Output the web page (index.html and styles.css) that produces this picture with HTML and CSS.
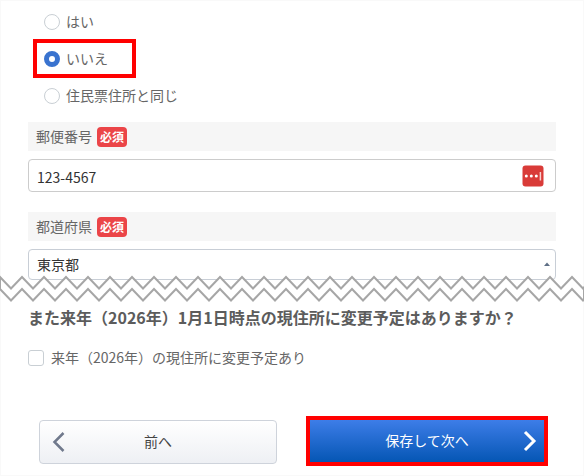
FILE: index.html
```html
<!DOCTYPE html>
<html lang="ja">
<head>
<meta charset="utf-8">
<meta name="viewport" content="width=device-width, initial-scale=1">
<title>住所の入力</title>
<link rel="stylesheet" href="styles.css">
</head>
<body>
<form class="page">
  <div class="choices">
    <label class="choice"><input class="radio" type="radio" name="same"><span class="choice-text">はい</span></label>
    <label class="choice choice-marked"><input class="radio" type="radio" name="same" checked><span class="choice-text">いいえ</span></label>
    <label class="choice"><input class="radio" type="radio" name="same"><span class="choice-text">住民票住所と同じ</span></label>
  </div>

  <div class="field">
    <div class="field-head"><label class="choice-text" for="zip">郵便番号</label><span class="badge">必須</span></div>
    <div class="control">
      <input class="input" id="zip" type="text" value="123-4567">
      <svg class="pass-icon" width="22" height="22" viewBox="0 0 22 22" aria-hidden="true">
        <rect x="0.500" y="0.500" width="21" height="21" rx="3" fill="#d93b38"/>
        <circle cx="4.300" cy="11" r="1.500" fill="#fff"/>
        <circle cx="9.300" cy="11" r="1.500" fill="#fff"/>
        <circle cx="14.300" cy="11" r="1.500" fill="#fff"/>
        <path d="M18.400 7v8.500" stroke="#f6d0cf" stroke-width="1.500"/>
      </svg>
    </div>
  </div>

  <div class="field">
    <div class="field-head"><label class="choice-text" for="pref">都道府県</label><span class="badge">必須</span></div>
    <div class="control">
      <select class="input select" id="pref"><option>東京都</option></select>
      <svg class="caret" width="8" height="4" viewBox="0 0 8 4" aria-hidden="true"><path d="M1 4 4 0.500 7 4z" fill="#5f6f86"/></svg>
    </div>
  </div>

  <svg class="tear" height="28" aria-hidden="true">
    <defs>
      <pattern id="zigzag" width="22" height="28" patternUnits="userSpaceOnUse">
        <path d="M-11 13.500 0 2 11 13.500 22 2 33 13.500V25.500L22 14 11 25.500 0 14-11 25.500z" fill="#fff"/>
        <path d="M-11 13.500 0 2 11 13.500 22 2 33 13.500M-11 25.500 0 14 11 25.500 22 14 33 25.500" fill="none" stroke="#a6a6a6" stroke-width="2"/>
      </pattern>
    </defs>
    <rect width="100%" height="28" fill="url(#zigzag)"/>
    <line x1="0" y1="2" x2="0" y2="14" stroke="#a6a6a6" stroke-width="2"/>
    <line x1="100%" y1="13" x2="100%" y2="25" stroke="#a6a6a6" stroke-width="2"/>
  </svg>

  <h2 class="question">また来年（2026年）1月1日時点の現住所に変更予定はありますか？</h2>
  <label class="check-row"><input class="check" type="checkbox"><span class="choice-text">来年（2026年）の現住所に変更予定あり</span></label>

  <div class="actions">
    <button class="btn btn-prev" type="button">
      <svg class="arrow arrow-left" width="14" height="22" viewBox="0 0 14 22" aria-hidden="true"><path d="M11.500 2 2.500 11l9 9" fill="none" stroke="#70798c" stroke-width="2.500"/></svg>
      前へ
    </button>
    <button class="btn btn-next" type="button">
      保存して次へ
      <svg class="arrow arrow-right" width="14" height="22" viewBox="0 0 14 22" aria-hidden="true"><path d="m2 2 9 9-9 9" fill="none" stroke="#fff" stroke-width="3"/></svg>
    </button>
  </div>
</form>
</body>
</html>
```
FILE: styles.css
```css
* {
  box-sizing: border-box;
}

body {
  margin: 0;
  background: #fff;
  color: #666;
  font: 14px/20px "Noto Sans CJK JP", sans-serif;
}

.page {
  min-height: 100vh;
  padding: 2px 27px 0;
  border: 1px solid #f9f9f9;
}

.choices {
  padding-left: 16px;
  margin-bottom: 8px;
}

.choice {
  position: relative;
  display: flex;
  align-items: center;
  gap: 6px;
  width: fit-content;
  height: 37px;
}

.choice-text {
  padding-bottom: 2px;
}

.choice-marked::before {
  content: "";
  position: absolute;
  inset: -1px -28px -1px -11px;
  border: 4px solid #f00;
}

.radio,
.check {
  appearance: none;
  flex: none;
  width: 16px;
  height: 16px;
  margin: 0;
  border: 1px solid #c9cfd4;
  background: #fff;
}

.radio {
  border-radius: 50%;
}

.radio:checked {
  border: 5px solid #3973cf;
}

.check {
  border-radius: 3px;
}

.field {
  margin-bottom: 20px;
}

.field-head {
  display: flex;
  align-items: center;
  gap: 5px;
  height: 29px;
  padding-left: 8px;
  margin-bottom: 8px;
  background: #f6f6f6;
}

.badge {
  height: 20px;
  padding: 0 3px;
  border-radius: 4px;
  background: #eb4548;
  color: #fff;
  font-size: 12px;
  font-weight: 700;
  line-height: 20px;
}

.control {
  position: relative;
}

.input {
  display: block;
  width: 100%;
  height: 33px;
  padding: 2px 8px 0;
  border: 1px solid #ccc;
  border-radius: 4px;
  background: #fff;
  color: #333;
  font: inherit;
}

.select {
  appearance: none;
  height: 31px;
  padding-top: 0;
  padding-bottom: 1px;
  border-color: #c8ced6;
}

.pass-icon {
  position: absolute;
  top: 6px;
  right: 12px;
}

.caret {
  position: absolute;
  top: 13px;
  right: 5px;
}

.tear {
  position: relative;
  display: block;
  width: calc(100% + 56px);
  margin: -25px -28px 0;
}

.question {
  margin: 2px 0 18px;
  color: #5c5c5c;
  font-size: 16px;
  font-weight: 700;
  line-height: 24px;
}

.check-row {
  display: flex;
  align-items: center;
  gap: 7px;
}

.actions {
  display: grid;
  grid-template-columns: 238fr 242fr;
  gap: 29px;
  padding: 0 8px 0 11px;
  margin-top: 47px;
}

.btn {
  position: relative;
  height: 50px;
  padding: 0 0 2px;
  font: inherit;
}

.btn-prev {
  height: 44px;
  margin-top: 4px;
  border: 1px solid #ced3db;
  border-radius: 4px;
  background: linear-gradient(#fff, #eef0f4);
  color: #444;
}

.btn-next {
  border: 4px solid #f00;
  background: linear-gradient(#3d7de8, #0556b4) padding-box;
  color: #fff;
}

.arrow {
  position: absolute;
  top: 50%;
  transform: translateY(-50%);
}

.arrow-left {
  left: 12px;
}

.arrow-right {
  right: 7px;
}
```
